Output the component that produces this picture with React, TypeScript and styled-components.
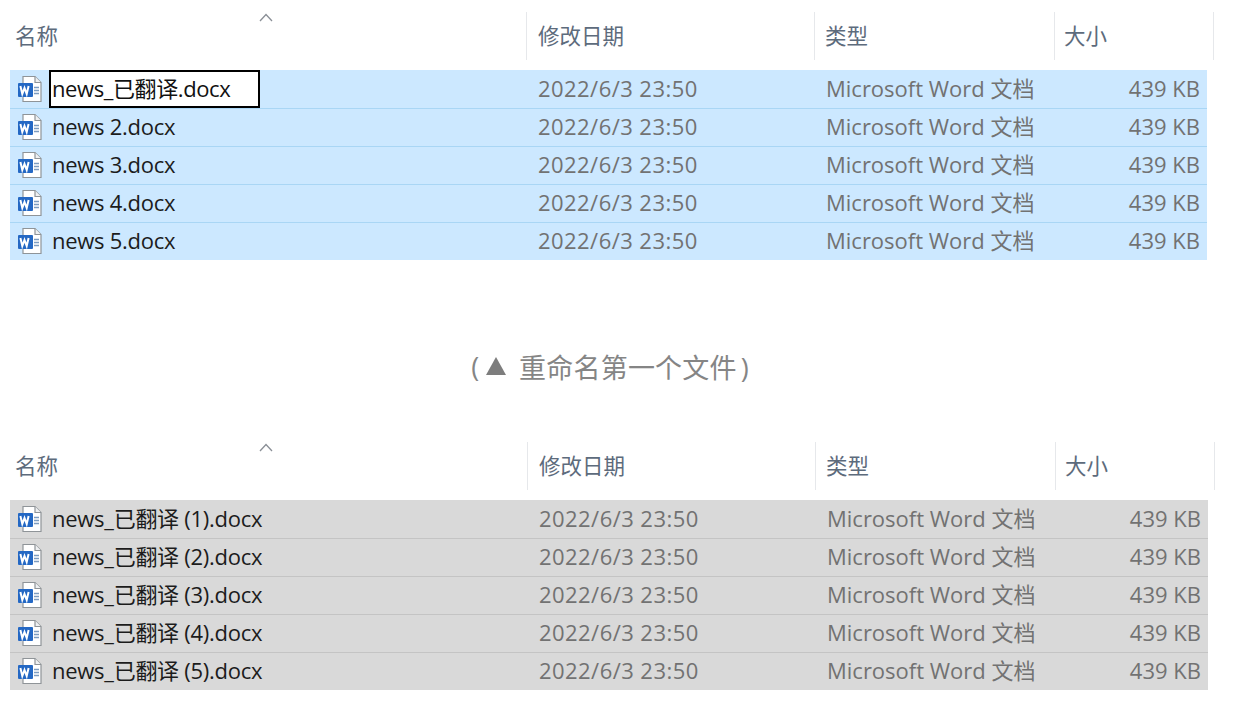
import styled, { createGlobalStyle } from 'styled-components';

const GlobalStyle = createGlobalStyle`
	html, body {
		margin: 0;
		padding: 0;
		background: #fff;
		overflow: hidden;
	}
	body {
		font-family: 'Open Sans', 'Noto Sans CJK SC', sans-serif;
	}
`;

const Page = styled.div`
	width: 1242px;
	height: 722px;
	display: flex;
	flex-direction: column;
	padding: 12px 0 0 10px;
	box-sizing: border-box;
`;

const Panel = styled.section`
	width: 1204px;
`;

const Header = styled.div<{ $wide?: boolean }>`
	position: relative;
	display: grid;
	grid-template-columns: ${({ $wide }) => ($wide ? '518px' : '517px')} 288px 240px 159px;
	height: 48px;
	margin-bottom: 10px;
`;

const HeaderCell = styled.div<{ $inset: number }>`
	display: flex;
	align-items: center;
	padding: 0 0 3px ${({ $inset }) => $inset}px;
	box-sizing: border-box;
	font-size: 21.5px;
	color: #5d6b7c;
	border-right: 1px solid #e6e8eb;
`;

const SortArrow = styled.svg`
	position: absolute;
	left: 249px;
	top: 1px;
	width: 14px;
	height: 9px;
	fill: none;
	stroke: #8a8f96;
	stroke-width: 1.3;
`;

const Rows = styled.div<{ $tone: 'blue' | 'gray'; $wide?: boolean }>`
	width: ${({ $wide }) => ($wide ? '1198px' : '1197px')};
	background: ${({ $tone }) => ($tone === 'blue' ? '#cce8ff' : '#d9d9d9')};
	--row-line: ${({ $tone }) => ($tone === 'blue' ? '#a9d6f5' : '#c4c4c4')};
`;

const Row = styled.div<{ $wide?: boolean }>`
	display: grid;
	grid-template-columns: ${({ $wide }) => ($wide ? '517px' : '516px')} 288px 240px 153px;
	height: 38px;
	line-height: 36px;
	align-items: center;

	& + & {
		box-shadow: inset 0 1px 0 var(--row-line);
	}
`;

const NameCell = styled.div`
	display: flex;
	align-items: center;
	gap: 9px;
	padding-left: 7px;
	font-size: 22px;
	letter-spacing: -0.27px;
	color: #1c1c1c;
	white-space: nowrap;
`;

const FileName = styled.span`
	padding-bottom: 2px;
`;

const RenameBox = styled.span`
	display: inline-block;
	width: 211px;
	height: 38px;
	line-height: 33px;
	box-sizing: border-box;
	margin: 0 0 0 -3px;
	padding-left: 1px;
	background: #fff;
	border: 2.5px solid #000;
	color: #111;
	letter-spacing: -0.4px;
`;

const DataCell = styled.div<{ $right?: boolean; $spaced?: boolean }>`
	font-size: 22px;
	color: #727272;
	white-space: nowrap;
	letter-spacing: ${({ $spaced }) => ($spaced ? '0.45px' : '0')};
	padding-bottom: 2px;
	padding-left: ${({ $right }) => ($right ? '0' : '12px')};
	padding-right: ${({ $right }) => ($right ? '7px' : '0')};
	text-align: ${({ $right }) => ($right ? 'right' : 'left')};
`;

const Caption = styled.div`
	height: 182px;
	padding-top: 30px;
	box-sizing: border-box;
	display: flex;
	align-items: center;
	justify-content: center;
	gap: 12px;
	width: 1200px;
	font-size: 27px;
	color: #858585;
`;

const CaptionMark = styled.span`
	display: flex;
	align-items: center;
	gap: 6px;
`;

const CaptionText = styled.span`
	letter-spacing: 0.2px;
`;

const CloseParen = styled.span`
	margin-left: 4px;
`;

const Triangle = styled.svg`
	width: 22px;
	height: 20px;
	fill: #7d7d7d;
`;

function WordIcon() {
	return (
		<svg width="26" height="28" viewBox="0 0 26 28" style={{ flex: 'none' }}>
			<path d="M6 1.5h12l6 6v19H6z" fill="#fff" stroke="#8f9498" strokeWidth="1.2" />
			<path d="M18 1.5v6h6" fill="#eef0f2" stroke="#8f9498" strokeWidth="1.2" />
			<path d="M17 12.5h5M17 15.5h5M17 18.5h5" stroke="#7d9cc0" strokeWidth="1.3" />
			<rect x="1" y="8" width="15" height="14" rx="1" fill="#2468c4" />
			<path d="M3.4 11l1.9 8 2.2-6 2.2 6 1.9-8" fill="none" stroke="#fff" strokeWidth="2" />
		</svg>
	);
}

type FilePanelProps = {
	tone: 'blue' | 'gray';
	names: string[];
	renaming?: boolean;
	wide?: boolean;
};

function FilePanel({ tone, names, renaming, wide }: FilePanelProps) {
	return (
		<Panel>
			<Header $wide={wide}>
				<SortArrow viewBox="0 0 14 9">
					<path d="M1 8l6-6.5L13 8" />
				</SortArrow>
				<HeaderCell $inset={5}>名称</HeaderCell>
				<HeaderCell $inset={11}>修改日期</HeaderCell>
				<HeaderCell $inset={10}>类型</HeaderCell>
				<HeaderCell $inset={9}>大小</HeaderCell>
			</Header>
			<Rows $tone={tone} $wide={wide}>
				{names.map((name, i) => (
					<Row key={name} $wide={wide}>
						<NameCell>
							<WordIcon />
							{renaming && i === 0 ? <RenameBox>{name}</RenameBox> : <FileName>{name}</FileName>}
						</NameCell>
						<DataCell $spaced>2022/6/3 23:50</DataCell>
						<DataCell>Microsoft Word 文档</DataCell>
						<DataCell $right>439 KB</DataCell>
					</Row>
				))}
			</Rows>
		</Panel>
	);
}

export default function App() {
	return (
		<Page>
			<GlobalStyle />
			<FilePanel
				tone="blue"
				renaming
				names={['news_已翻译.docx', 'news 2.docx', 'news 3.docx', 'news 4.docx', 'news 5.docx']}
			/>
			<Caption>
				<CaptionMark>
					(<Triangle viewBox="0 0 22 20"><path d="M11 1l10 18H1z" /></Triangle>
				</CaptionMark>
				<CaptionText>
					重命名第一个文件<CloseParen>)</CloseParen>
				</CaptionText>
			</Caption>
			<FilePanel
				tone="gray"
				wide
				names={[
					'news_已翻译 (1).docx',
					'news_已翻译 (2).docx',
					'news_已翻译 (3).docx',
					'news_已翻译 (4).docx',
					'news_已翻译 (5).docx',
				]}
			/>
		</Page>
	);
}
